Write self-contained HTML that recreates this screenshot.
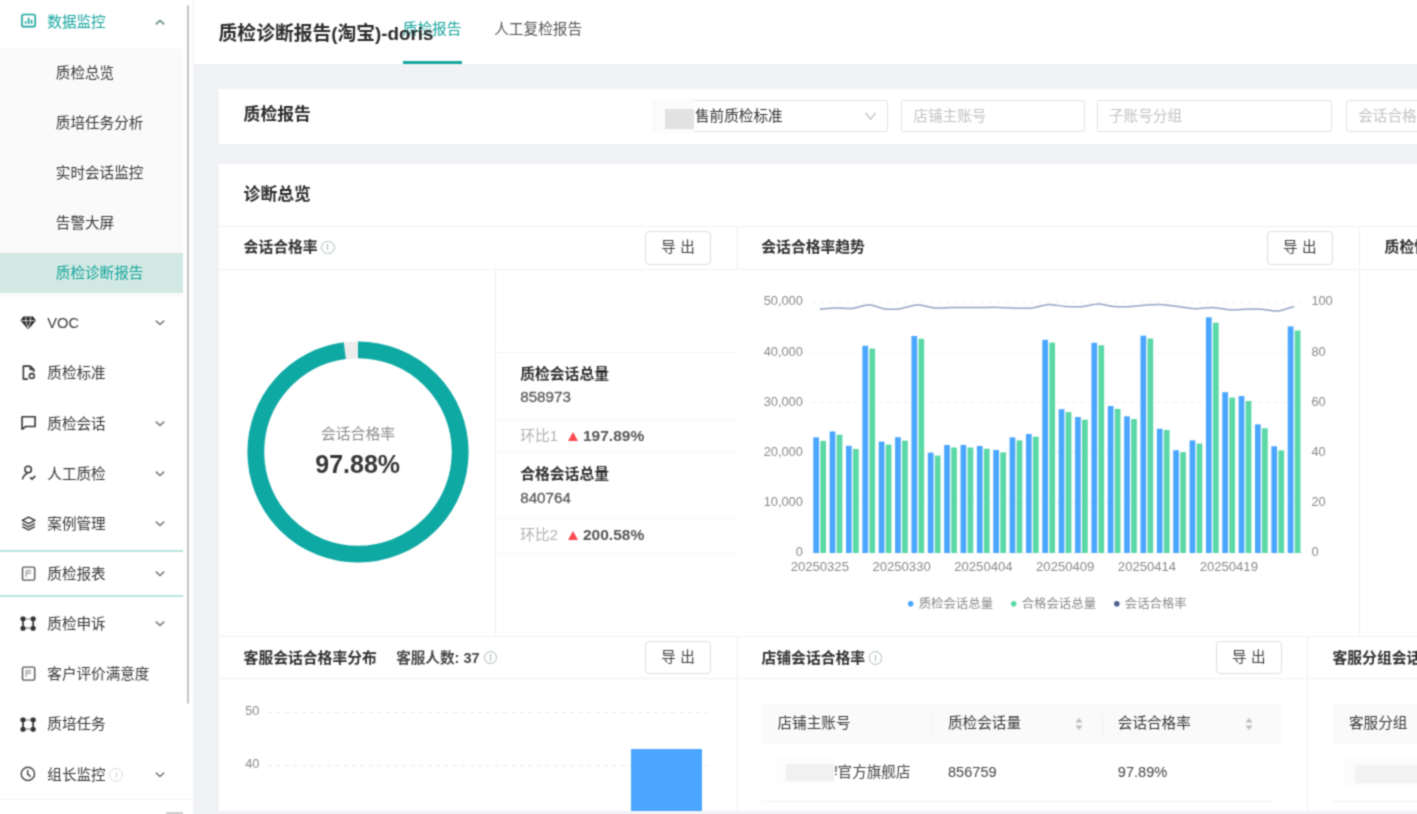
<!DOCTYPE html>
<html lang="zh-CN">
<head>
<meta charset="utf-8">
<title>质检诊断报告</title>
<style>
*{box-sizing:border-box;margin:0;padding:0}
html,body{width:1417px;height:814px;overflow:hidden;background:#fff}
body{font-family:"Liberation Sans","Noto Sans CJK SC",sans-serif;font-size:14.6px;color:#333;position:relative;filter:url(#sb)}
.abs{position:absolute}
i{font-style:normal}
/* sidebar */
#side{position:absolute;left:0;top:0;width:193.5px;height:814px;background:#fff;border-right:1px solid #f0f0f0}
#subbg{position:absolute;left:0;top:48px;width:182.5px;height:249px;background:#fafafa}
#selbg{position:absolute;left:0;top:252.5px;width:182.5px;height:40.7px;background:#d2e9e3}
.mi{position:absolute;left:0;width:182px;height:24px;line-height:24px;white-space:nowrap;color:#383838;font-size:14.6px}
.mi .tx{position:absolute;left:47.3px;top:0}
.mi.sub .tx{left:55.8px}
.mi svg.ic{position:absolute;left:20.8px;top:3.8px;width:15.2px;height:15.2px}
.mi svg.ar{position:absolute;left:154.8px;top:7.3px;width:10px;height:9px}
.teal,.mi.teal{color:#17a59e}
#sbar{position:absolute;left:187px;top:5px;width:1.8px;height:699px;background:#c4c4c4;border-radius:1px}
.tline{position:absolute;left:0;width:182.7px;height:2.2px;background:#b7e6de}
/* main */
#main{position:absolute;left:194px;top:0;width:1223px;height:814px;background:#f0f2f5}
#hdr{position:absolute;left:194px;top:0;width:1223px;height:63.8px;background:#fff}
.card{position:absolute;background:#fff}
.h16{font-weight:bold;color:#2b2b2b}
.btn{position:absolute;width:66.4px;height:33.2px;border:1px solid #dedede;border-radius:4px;background:#fff;text-align:center;line-height:31px;font-size:14.6px;color:#444;letter-spacing:4.5px;padding-left:4.5px;white-space:nowrap}
.inp{position:absolute;top:100px;height:32.2px;border:1px solid #e2e2e2;border-radius:2.5px;background:#fff;line-height:30.8px;font-size:14.6px;color:#c3c3c3;padding-left:11px;white-space:nowrap;overflow:hidden}
.hl{position:absolute;height:1px;background:#f1f2f5}
.vl{position:absolute;width:1px;background:#f1f2f5}
.pt{position:absolute;font-weight:bold;font-size:14.8px;color:#303030;white-space:nowrap;line-height:20px}
.info{display:inline-block;width:13.6px;height:13.6px;border:1.1px solid #afbcbf;border-radius:50%;vertical-align:-1.8px;margin-left:3.5px;position:relative}
.info:before{content:"";position:absolute;left:5.1px;top:2.6px;width:1.2px;height:6.2px;background:#a9b6b9}
.info.big{width:14.2px;height:14.2px;border-color:#dcdcdc;margin-left:3.5px;vertical-align:-2.2px}.info.big:before{left:5.4px;top:3px;height:6.5px;background:#d5d5d5}
.st{font-size:15.2px;line-height:20px;color:#5c5c5c;white-space:nowrap;-webkit-text-stroke:0.3px #5c5c5c}
.st b{color:#555;font-size:15.5px;-webkit-text-stroke:0}.st .hb{font-size:14.8px;-webkit-text-stroke:0}
.hb{color:#b2b2b2}
.tri{display:inline-block;width:0;height:0;border-left:5.1px solid transparent;border-right:5.1px solid transparent;border-bottom:9.4px solid #fb4b50;margin:0 4.6px 0 10.4px;vertical-align:0px}
.ax{font-size:12.8px;line-height:16px;color:#8a8a8a}
.dash{height:1.2px;background:repeating-linear-gradient(90deg,#eaeaea 0 4px,transparent 4px 8.4px)}
.th{font-size:14.6px;line-height:22px;color:#3a3a3a;white-space:nowrap}
.td{font-size:14.6px;line-height:22px;color:#444;white-space:nowrap}
</style>
</head>

<body>
<svg width="0" height="0" style="position:absolute"><filter id="sb" x="0" y="0" width="100%" height="100%" color-interpolation-filters="sRGB"><feConvolveMatrix order="3" kernelMatrix="0.0439 0.1217 0.0439 0.1217 0.3376 0.1217 0.0439 0.1217 0.0439" edgeMode="duplicate" preserveAlpha="true"/></filter></svg>
<div id="main"></div>
<div id="hdr"></div>
<div class="abs teal" id="tab1" style="left:402.8px;top:18px;line-height:22px;font-size:14.67px;white-space:nowrap">质检报告</div>
<div class="abs" id="tab2" style="left:494.2px;top:18px;line-height:22px;font-size:14.67px;white-space:nowrap;color:#555">人工复检报告</div>
<div class="abs" style="left:403px;top:60.7px;width:58.5px;height:3.1px;background:#18a7a0"></div>
<div class="abs h16" id="title" style="left:218.6px;top:20.6px;line-height:26px;font-size:18.8px;white-space:nowrap">质检诊断报告(淘宝)-doris</div>
<div class="card" style="left:218.5px;top:89.1px;width:1210px;height:55.1px"></div>
<div class="abs h16" style="left:243.6px;top:103.4px;line-height:24px;font-size:16.8px;white-space:nowrap">质检报告</div>
<div class="inp" style="left:653px;width:235px;color:#333;padding-left:41px">售前质检标准<svg style="position:absolute;left:210px;top:8.6px;width:13px;height:12px" viewBox="0 0 13 12"><path d="M1.6 3l4.9 6.2L11.4 3" fill="none" stroke="#c2c2c2" stroke-width="1.3"/></svg></div>
<div class="abs" style="left:652px;top:98.5px;width:42px;height:34.5px;background:#fbfbfb"></div>
<div class="abs" style="left:665px;top:109px;width:28.6px;height:20px;background:#e2e2e2"></div>
<div class="inp" style="left:901.4px;width:183.4px">店铺主账号</div>
<div class="inp" style="left:1097px;width:235.4px">子账号分组</div>
<div class="inp" style="left:1346.2px;width:120px">会话合格率</div>
<div class="card" style="left:218.5px;top:164px;width:1210px;height:647px"></div>
<div class="abs h16" style="left:243.6px;top:183.3px;line-height:24px;font-size:16.8px;white-space:nowrap">诊断总览</div>
<div class="hl" style="left:218.5px;top:225.6px;width:1200px"></div>
<div class="hl" style="left:218.5px;top:268.5px;width:1200px"></div>
<div class="hl" style="left:218.5px;top:636px;width:1200px"></div>
<div class="hl" style="left:218.5px;top:677.8px;width:1200px"></div>
<div class="vl" style="left:495.4px;top:268px;height:368px"></div>
<div class="vl" style="left:736.6px;top:226px;height:42.5px"></div>
<div class="vl" style="left:736.6px;top:636px;height:175px"></div>
<div class="vl" style="left:1359.2px;top:226px;height:410px"></div>
<div class="vl" style="left:1306.8px;top:636px;height:175px"></div>
<div class="pt" style="left:243.6px;top:237.3px">会话合格率<i class="info"></i></div>
<div class="btn" style="left:644.8px;top:231.4px">导出</div>
<div class="pt" style="left:761.3px;top:237.3px">会话合格率趋势</div>
<div class="btn" style="left:1266.6px;top:231.4px">导出</div>
<div class="pt" style="left:1384.6px;top:237.3px">质检情况分布</div>
<svg class="abs" style="left:237.6px;top:332.3px" width="240" height="240" viewBox="0 0 240 240"><circle cx="120" cy="120" r="102.2" fill="none" stroke="#ededed" stroke-width="16.8"/><circle cx="120" cy="120" r="102.2" fill="none" stroke="#0fa9a4" stroke-width="16.8" stroke-dasharray="627.74 14.4" transform="rotate(-90 120 120)"/></svg>
<div class="abs" style="left:298px;top:423px;width:120px;text-align:center;line-height:22px;font-size:14.8px;color:#8c8c8c">会话合格率</div>
<div class="abs" style="left:287.7px;top:448.3px;width:140px;text-align:center;line-height:32px;font-size:25px;font-weight:bold;color:#363636">97.88%</div>
<div class="hl" style="left:496px;top:351.9px;width:241px;background:#f5f5f6"></div>
<div class="hl" style="left:496px;top:419.2px;width:241px;background:#f5f5f6"></div>
<div class="hl" style="left:496px;top:452.2px;width:241px;background:#f5f5f6"></div>
<div class="hl" style="left:496px;top:518.3px;width:241px;background:#f5f5f6"></div>
<div class="hl" style="left:496px;top:552.5px;width:241px;background:#f5f5f6"></div>
<div class="pt" style="left:520.2px;top:363.8px">质检会话总量</div>
<div class="abs st" style="left:520.2px;top:386.9px">858973</div>
<div class="abs st" style="left:520.2px;top:426.2px"><span class="hb">环比1</span><i class="tri"></i><b>197.89%</b></div>
<div class="pt" style="left:520.2px;top:464px">合格会话总量</div>
<div class="abs st" style="left:520.2px;top:487.6px">840764</div>
<div class="abs st" style="left:520.2px;top:524.5px"><span class="hb">环比2</span><i class="tri"></i><b>200.58%</b></div>
<svg class="abs" style="left:750px;top:285px" width="600" height="340" viewBox="750 285 600 340" font-family="Liberation Sans, Noto Sans CJK SC, sans-serif">
<line x1="811.6" y1="553" x2="1302.4" y2="553" stroke="#efefef" stroke-width="1" stroke-dasharray="4 4.4"/>
<line x1="811.6" y1="502.8" x2="1302.4" y2="502.8" stroke="#efefef" stroke-width="1" stroke-dasharray="4 4.4"/>
<line x1="811.6" y1="452.6" x2="1302.4" y2="452.6" stroke="#efefef" stroke-width="1" stroke-dasharray="4 4.4"/>
<line x1="811.6" y1="402.4" x2="1302.4" y2="402.4" stroke="#efefef" stroke-width="1" stroke-dasharray="4 4.4"/>
<line x1="811.6" y1="352.2" x2="1302.4" y2="352.2" stroke="#efefef" stroke-width="1" stroke-dasharray="4 4.4"/>
<line x1="811.6" y1="302" x2="1302.4" y2="302" stroke="#efefef" stroke-width="1" stroke-dasharray="4 4.4"/>
<rect x="813.3" y="437.4" width="5.7" height="115.6" fill="#4aa6fe"/>
<rect x="820.3" y="440.9" width="5.7" height="112.1" fill="#5ad8a6"/>
<rect x="829.66" y="431.5" width="5.7" height="121.5" fill="#4aa6fe"/>
<rect x="836.66" y="434.7" width="5.7" height="118.3" fill="#5ad8a6"/>
<rect x="846.02" y="445.8" width="5.7" height="107.2" fill="#4aa6fe"/>
<rect x="853.02" y="449" width="5.7" height="104" fill="#5ad8a6"/>
<rect x="862.38" y="345.8" width="5.7" height="207.2" fill="#4aa6fe"/>
<rect x="869.38" y="348.6" width="5.7" height="204.4" fill="#5ad8a6"/>
<rect x="878.74" y="441.6" width="5.7" height="111.4" fill="#4aa6fe"/>
<rect x="885.74" y="444.6" width="5.7" height="108.4" fill="#5ad8a6"/>
<rect x="895.1" y="437.2" width="5.7" height="115.8" fill="#4aa6fe"/>
<rect x="902.1" y="440.6" width="5.7" height="112.4" fill="#5ad8a6"/>
<rect x="911.46" y="336" width="5.7" height="217" fill="#4aa6fe"/>
<rect x="918.46" y="338.8" width="5.7" height="214.2" fill="#5ad8a6"/>
<rect x="927.82" y="452.7" width="5.7" height="100.3" fill="#4aa6fe"/>
<rect x="934.82" y="455.6" width="5.7" height="97.4" fill="#5ad8a6"/>
<rect x="944.18" y="445" width="5.7" height="108" fill="#4aa6fe"/>
<rect x="951.18" y="447.5" width="5.7" height="105.5" fill="#5ad8a6"/>
<rect x="960.54" y="445" width="5.7" height="108" fill="#4aa6fe"/>
<rect x="967.54" y="447.5" width="5.7" height="105.5" fill="#5ad8a6"/>
<rect x="976.9" y="446" width="5.7" height="107" fill="#4aa6fe"/>
<rect x="983.9" y="448.7" width="5.7" height="104.3" fill="#5ad8a6"/>
<rect x="993.26" y="450" width="5.7" height="103" fill="#4aa6fe"/>
<rect x="1000.26" y="452.4" width="5.7" height="100.6" fill="#5ad8a6"/>
<rect x="1009.62" y="437.4" width="5.7" height="115.6" fill="#4aa6fe"/>
<rect x="1016.62" y="440.4" width="5.7" height="112.6" fill="#5ad8a6"/>
<rect x="1025.98" y="434" width="5.7" height="119" fill="#4aa6fe"/>
<rect x="1032.98" y="436.7" width="5.7" height="116.3" fill="#5ad8a6"/>
<rect x="1042.34" y="339.8" width="5.7" height="213.2" fill="#4aa6fe"/>
<rect x="1049.34" y="342.6" width="5.7" height="210.4" fill="#5ad8a6"/>
<rect x="1058.7" y="409.2" width="5.7" height="143.8" fill="#4aa6fe"/>
<rect x="1065.7" y="412.1" width="5.7" height="140.9" fill="#5ad8a6"/>
<rect x="1075.06" y="417" width="5.7" height="136" fill="#4aa6fe"/>
<rect x="1082.06" y="419.7" width="5.7" height="133.3" fill="#5ad8a6"/>
<rect x="1091.42" y="342.8" width="5.7" height="210.2" fill="#4aa6fe"/>
<rect x="1098.42" y="345.3" width="5.7" height="207.7" fill="#5ad8a6"/>
<rect x="1107.78" y="406" width="5.7" height="147" fill="#4aa6fe"/>
<rect x="1114.78" y="408.9" width="5.7" height="144.1" fill="#5ad8a6"/>
<rect x="1124.14" y="416.3" width="5.7" height="136.7" fill="#4aa6fe"/>
<rect x="1131.14" y="419" width="5.7" height="134" fill="#5ad8a6"/>
<rect x="1140.5" y="335.7" width="5.7" height="217.3" fill="#4aa6fe"/>
<rect x="1147.5" y="338.6" width="5.7" height="214.4" fill="#5ad8a6"/>
<rect x="1156.86" y="428.8" width="5.7" height="124.2" fill="#4aa6fe"/>
<rect x="1163.86" y="430" width="5.7" height="123" fill="#5ad8a6"/>
<rect x="1173.22" y="450.2" width="5.7" height="102.8" fill="#4aa6fe"/>
<rect x="1180.22" y="452.2" width="5.7" height="100.8" fill="#5ad8a6"/>
<rect x="1189.58" y="440.4" width="5.7" height="112.6" fill="#4aa6fe"/>
<rect x="1196.58" y="443.6" width="5.7" height="109.4" fill="#5ad8a6"/>
<rect x="1205.94" y="317.3" width="5.7" height="235.7" fill="#4aa6fe"/>
<rect x="1212.94" y="322.7" width="5.7" height="230.3" fill="#5ad8a6"/>
<rect x="1222.3" y="392.2" width="5.7" height="160.8" fill="#4aa6fe"/>
<rect x="1229.3" y="397.6" width="5.7" height="155.4" fill="#5ad8a6"/>
<rect x="1238.66" y="396.1" width="5.7" height="156.9" fill="#4aa6fe"/>
<rect x="1245.66" y="401" width="5.7" height="152" fill="#5ad8a6"/>
<rect x="1255.02" y="424.4" width="5.7" height="128.6" fill="#4aa6fe"/>
<rect x="1262.02" y="428.3" width="5.7" height="124.7" fill="#5ad8a6"/>
<rect x="1271.38" y="446.3" width="5.7" height="106.7" fill="#4aa6fe"/>
<rect x="1278.38" y="450.4" width="5.7" height="102.6" fill="#5ad8a6"/>
<rect x="1287.74" y="326.4" width="5.7" height="226.6" fill="#4aa6fe"/>
<rect x="1294.74" y="330.5" width="5.7" height="222.5" fill="#5ad8a6"/>
<path d="M819.8 309C821.6 308.9 832.6 308 836.2 307.9C839.8 307.8 848.9 308.8 852.5 308.4C856.1 308 865.3 304.6 868.9 304.7C872.5 304.8 881.6 308.6 885.2 309C888.8 309.4 898 308.9 901.6 308.4C905.2 307.9 914.4 304.7 918 304.7C921.6 304.7 930.7 307.7 934.3 308C937.9 308.3 947.1 307.6 950.7 307.5C954.3 307.4 963.4 307.4 967 307.4C970.6 307.4 979.8 307.4 983.4 307.4C987 307.4 996.2 307.3 999.8 307.4C1003.4 307.5 1012.5 308.1 1016.1 308.2C1019.7 308.3 1028.9 308.3 1032.5 307.9C1036.1 307.5 1045.2 304.7 1048.8 304.5C1052.4 304.3 1061.6 306.3 1065.2 306.5C1068.8 306.7 1078 307 1081.6 306.7C1085.2 306.4 1094.3 304 1097.9 304C1101.5 304 1110.7 306.2 1114.3 306.5C1117.9 306.8 1127 306.7 1130.6 306.5C1134.2 306.3 1143.4 305.2 1147 305C1150.6 304.8 1159.8 304.5 1163.4 304.7C1167 304.9 1176.1 306.3 1179.7 306.7C1183.3 307.1 1192.5 308.6 1196.1 308.7C1199.7 308.8 1208.8 307.3 1212.4 307.4C1216 307.5 1225.2 309.5 1228.8 309.7C1232.4 309.9 1241.6 309.3 1245.2 309.2C1248.8 309.1 1257.9 309 1261.5 309.2C1265.1 309.4 1274.3 311.4 1277.9 311.1C1281.5 310.8 1292.4 307 1294.2 306.5" fill="none" stroke="#95a3c4" stroke-width="1.5" stroke-linejoin="round"/>
<text x="802.8" y="556.4" text-anchor="end" font-size="12.8" fill="#8a8a8a">0</text>
<text x="802.8" y="506.2" text-anchor="end" font-size="12.8" fill="#8a8a8a">10,000</text>
<text x="802.8" y="456" text-anchor="end" font-size="12.8" fill="#8a8a8a">20,000</text>
<text x="802.8" y="405.8" text-anchor="end" font-size="12.8" fill="#8a8a8a">30,000</text>
<text x="802.8" y="355.6" text-anchor="end" font-size="12.8" fill="#8a8a8a">40,000</text>
<text x="802.8" y="305.4" text-anchor="end" font-size="12.8" fill="#8a8a8a">50,000</text>
<text x="1311.4" y="556.4" font-size="12.8" fill="#8a8a8a">0</text>
<text x="1311.4" y="506.2" font-size="12.8" fill="#8a8a8a">20</text>
<text x="1311.4" y="456" font-size="12.8" fill="#8a8a8a">40</text>
<text x="1311.4" y="405.8" font-size="12.8" fill="#8a8a8a">60</text>
<text x="1311.4" y="355.6" font-size="12.8" fill="#8a8a8a">80</text>
<text x="1311.4" y="305.4" font-size="12.8" fill="#8a8a8a">100</text>
<text x="819.8" y="571.1" text-anchor="middle" font-size="13.1" fill="#8a8a8a">20250325</text>
<text x="901.6" y="571.1" text-anchor="middle" font-size="13.1" fill="#8a8a8a">20250330</text>
<text x="983.4" y="571.1" text-anchor="middle" font-size="13.1" fill="#8a8a8a">20250404</text>
<text x="1065.2" y="571.1" text-anchor="middle" font-size="13.1" fill="#8a8a8a">20250409</text>
<text x="1147" y="571.1" text-anchor="middle" font-size="13.1" fill="#8a8a8a">20250414</text>
<text x="1228.8" y="571.1" text-anchor="middle" font-size="13.1" fill="#8a8a8a">20250419</text>
<circle cx="910.7" cy="603.8" r="2.8" fill="#4aa6fe"/>
<text x="918.7" y="608.2" font-size="12.4" fill="#8a8a8a">质检会话总量</text>
<circle cx="1013.7" cy="603.8" r="2.8" fill="#5ad8a6"/>
<text x="1021.7" y="608.2" font-size="12.4" fill="#8a8a8a">合格会话总量</text>
<circle cx="1116.8" cy="603.8" r="2.8" fill="#4c5f8d"/>
<text x="1124.8" y="608.2" font-size="12.4" fill="#8a8a8a">会话合格率</text>
</svg>
<div class="pt" style="left:243.6px;top:647.7px">客服会话合格率分布<span style="margin-left:19.4px;color:#484848;font-size:14.6px">客服人数: 37</span><i class="info" style="margin-left:4px"></i></div>
<div class="btn" style="left:644.8px;top:641.3px">导出</div>
<div class="pt" style="left:761.5px;top:648.2px">店铺会话合格率<i class="info"></i></div>
<div class="btn" style="left:1215.6px;top:641.3px">导出</div>
<div class="pt" style="left:1332.5px;top:648.2px">客服分组会话合格率</div>
<div class="abs ax" style="left:245.2px;top:702.8px">50</div>
<div class="abs ax" style="left:245.2px;top:756.4px">40</div>
<div class="abs dash" style="left:267.6px;top:711.5px;width:440.6px"></div>
<div class="abs dash" style="left:267.6px;top:764.8px;width:440.6px"></div>
<div class="abs" style="left:631.4px;top:749px;width:71px;height:62px;background:#4aa6fe"></div>
<div class="abs" style="left:762px;top:704.2px;width:519px;height:40px;background:#fafafa"></div>
<div class="vl" style="left:932px;top:714px;height:21px;background:#f0f0f0"></div>
<div class="vl" style="left:1101.8px;top:714px;height:21px;background:#f0f0f0"></div>
<div class="abs th" style="left:777.5px;top:711.6px">店铺主账号</div>
<div class="abs th" style="left:948px;top:711.6px">质检会话量</div>
<div class="abs th" style="left:1117.8px;top:711.6px">会话合格率</div>
<svg class="abs" style="left:1075.2px;top:716.6px" width="8" height="14" viewBox="0 0 8 14"><path d="M4 1 7.5 5.6H0.5z M4 13 7.5 8.4H0.5z" fill="#bdbdbd"/></svg>
<svg class="abs" style="left:1244.9px;top:716.6px" width="8" height="14" viewBox="0 0 8 14"><path d="M4 1 7.5 5.6H0.5z M4 13 7.5 8.4H0.5z" fill="#bdbdbd"/></svg>
<div class="abs td" style="left:793.8px;top:760.5px">某品牌官方旗舰店</div>
<div class="abs" style="left:776px;top:758px;width:58.5px;height:27px;background:#fdfdfd"></div>
<div class="abs" style="left:786px;top:763.5px;width:48px;height:17px;background:#f1f1f1"></div>
<div class="abs td" style="left:948px;top:760.5px">856759</div>
<div class="abs td" style="left:1117.8px;top:760.5px">97.89%</div>
<div class="hl" style="left:762px;top:801px;width:510px"></div>
<div class="abs" style="left:1332.5px;top:704.2px;width:100px;height:40px;background:#fafafa"></div>
<div class="abs th" style="left:1349px;top:711.6px">客服分组</div>
<div class="abs" style="left:1344px;top:759px;width:80px;height:26px;background:#fbfbfb"></div>
<div class="abs" style="left:1355px;top:764.5px;width:70px;height:18.5px;background:#f3f3f3"></div>
<div class="hl" style="left:1332.5px;top:801px;width:90px"></div>
<div id="side">
<div id="subbg"></div><div id="selbg"></div>
<div class="mi teal" style="top:10.3px"><svg class="ic" viewBox="0 0 14 14" style="top:2.9px"><rect x="0.9" y="1.4" width="12.2" height="11.2" rx="1.6" fill="none" stroke="currentColor" stroke-width="1.5"/><path d="M4.3 9.8V7.6M7 9.8V4.4M9.7 9.8V6.2" stroke="currentColor" stroke-width="1.5" fill="none"/></svg><span class="tx">数据监控</span><svg class="ar" viewBox="0 0 10 9"><path d="M0.8 6.4 5 2.5 9.2 6.4" fill="none" stroke="#5e8a86" stroke-width="1.6"/></svg></div>
<div class="mi sub" style="top:60.5px"><span class="tx">质检总览</span></div>
<div class="mi sub" style="top:110.6px"><span class="tx">质培任务分析</span></div>
<div class="mi sub" style="top:160.8px"><span class="tx">实时会话监控</span></div>
<div class="mi sub" style="top:210.9px"><span class="tx">告警大屏</span></div>
<div class="mi sub teal" style="top:261.1px"><span class="tx">质检诊断报告</span></div>
<div class="mi" style="top:311.2px"><svg class="ic" viewBox="0 0 16 14" style="width:16.4px;height:14px;left:19.8px;top:4.4px"><path d="M3.2 0.6h9.6L15.8 4.6 8 13.6 0.2 4.6z" fill="#2a2a2a"/><path d="M1 4.7h14M5.4 4.7 8 12.5 10.6 4.7M6 1 5.4 4.7M10 1l0.6 3.7" stroke="#fff" stroke-width="0.8" fill="none"/></svg><span class="tx">VOC</span><svg class="ar" viewBox="0 0 10 9"><path d="M0.8 2.6 5 6.5 9.2 2.6" fill="none" stroke="#777" stroke-width="1.5"/></svg></div>
<div class="mi" style="top:361.4px"><svg class="ic" viewBox="0 0 14 14"><path d="M8.6 1H2.2v12h4.2M8.6 1l3.2 3.2v2.2M8.6 1v3.2h3.2" fill="none" stroke="currentColor" stroke-width="1.5" stroke-linejoin="round"/><circle cx="10" cy="10.2" r="2.3" fill="none" stroke="currentColor" stroke-width="1.4"/><path d="M10 7.2v1.6" stroke="currentColor" stroke-width="1.3"/></svg><span class="tx">质检标准</span></div>
<div class="mi" style="top:411.5px"><svg class="ic" viewBox="0 0 14 14"><path d="M1 1.6h12v9H4.2L1 13.2z" fill="none" stroke="currentColor" stroke-width="1.5" stroke-linejoin="round"/></svg><span class="tx">质检会话</span><svg class="ar" viewBox="0 0 10 9"><path d="M0.8 2.6 5 6.5 9.2 2.6" fill="none" stroke="#777" stroke-width="1.5"/></svg></div>
<div class="mi" style="top:461.6px"><svg class="ic" viewBox="0 0 14 14"><circle cx="6.6" cy="4.2" r="3" fill="none" stroke="currentColor" stroke-width="1.4"/><path d="M1.4 13.2c0.6-3 2.4-4.6 4.4-5.4M8.4 11.4l1.8 1.6 3-3" fill="none" stroke="currentColor" stroke-width="1.4"/></svg><span class="tx">人工质检</span><svg class="ar" viewBox="0 0 10 9"><path d="M0.8 2.6 5 6.5 9.2 2.6" fill="none" stroke="#777" stroke-width="1.5"/></svg></div>
<div class="mi" style="top:511.8px"><svg class="ic" viewBox="0 0 14 14"><path d="M7 1 12.8 4 7 7 1.2 4z" fill="none" stroke="currentColor" stroke-width="1.4" stroke-linejoin="round"/><path d="M1.2 7 7 10l5.8-3M1.2 9.8 7 12.8l5.8-3" fill="none" stroke="currentColor" stroke-width="1.4" stroke-linejoin="round"/></svg><span class="tx">案例管理</span><svg class="ar" viewBox="0 0 10 9"><path d="M0.8 2.6 5 6.5 9.2 2.6" fill="none" stroke="#777" stroke-width="1.5"/></svg></div>
<div class="mi" style="top:561.9px"><svg class="ic" viewBox="0 0 14 14"><rect x="1.4" y="1" width="11.2" height="12" rx="1.2" fill="none" stroke="#555" stroke-width="1.3"/><path d="M4.8 4.3h4.4M4.8 6.5h4.4M4.8 4.3v5.5" stroke="#9a9a9a" stroke-width="1.1" fill="none"/></svg><span class="tx">质检报表</span><svg class="ar" viewBox="0 0 10 9"><path d="M0.8 2.6 5 6.5 9.2 2.6" fill="none" stroke="#777" stroke-width="1.5"/></svg></div>
<div class="mi" style="top:612.1px"><svg class="ic" viewBox="0 0 16 15" style="width:16.2px;height:15.2px;left:20.4px;top:4.3px"><path d="M3 3v9M13 3v9" stroke="#3a3a3a" stroke-width="1.7"/><path d="M3 3h10M3 12h10" stroke="#8a8a8a" stroke-width="1.1"/><rect x="0.5" y="0.4" width="5" height="4.8" rx="1.7" fill="#333"/><rect x="10.5" y="0.4" width="5" height="4.8" rx="1.7" fill="#333"/><rect x="0.5" y="9.8" width="5" height="4.8" rx="1.7" fill="#333"/><rect x="10.5" y="9.8" width="5" height="4.8" rx="1.7" fill="#333"/></svg><span class="tx">质检申诉</span><svg class="ar" viewBox="0 0 10 9"><path d="M0.8 2.6 5 6.5 9.2 2.6" fill="none" stroke="#777" stroke-width="1.5"/></svg></div>
<div class="mi" style="top:662.2px"><svg class="ic" viewBox="0 0 14 14"><rect x="1.4" y="1" width="11.2" height="12" rx="1.2" fill="none" stroke="#555" stroke-width="1.3"/><path d="M4.8 4.3h4.4M4.8 6.5h4.4M4.8 4.3v5.5" stroke="#9a9a9a" stroke-width="1.1" fill="none"/></svg><span class="tx">客户评价满意度</span></div>
<div class="mi" style="top:712.4px"><svg class="ic" viewBox="0 0 16 15" style="width:16.2px;height:15.2px;left:20.4px;top:4.3px"><path d="M3 3v9M13 3v9" stroke="#3a3a3a" stroke-width="1.7"/><path d="M3 3h10M3 12h10" stroke="#8a8a8a" stroke-width="1.1"/><rect x="0.5" y="0.4" width="5" height="4.8" rx="1.7" fill="#333"/><rect x="10.5" y="0.4" width="5" height="4.8" rx="1.7" fill="#333"/><rect x="0.5" y="9.8" width="5" height="4.8" rx="1.7" fill="#333"/><rect x="10.5" y="9.8" width="5" height="4.8" rx="1.7" fill="#333"/></svg><span class="tx">质培任务</span></div>
<div class="mi" style="top:762.5px"><svg class="ic" viewBox="0 0 14 14" style="width:15.8px;height:15.8px;left:20.4px;top:3.8px"><circle cx="7" cy="7" r="5.9" fill="none" stroke="#4a4a4a" stroke-width="1.3"/><path d="M6.8 3.6V7.2l2.6 2.2" fill="none" stroke="#4a4a4a" stroke-width="1.3"/></svg><span class="tx">组长监控<i class="info big"></i></span><svg class="ar" viewBox="0 0 10 9"><path d="M0.8 2.6 5 6.5 9.2 2.6" fill="none" stroke="#777" stroke-width="1.5"/></svg></div>
<div class="tline" style="top:550.3px"></div><div class="tline" style="top:594.8px"></div>
<div id="sbar"></div>
<div class="hl" style="left:0;top:799px;width:193px"></div>
<div class="abs" style="left:165.5px;top:811.5px;width:17px;height:3px;background:#d0d0d0"></div>
</div>
</body>
</html>
